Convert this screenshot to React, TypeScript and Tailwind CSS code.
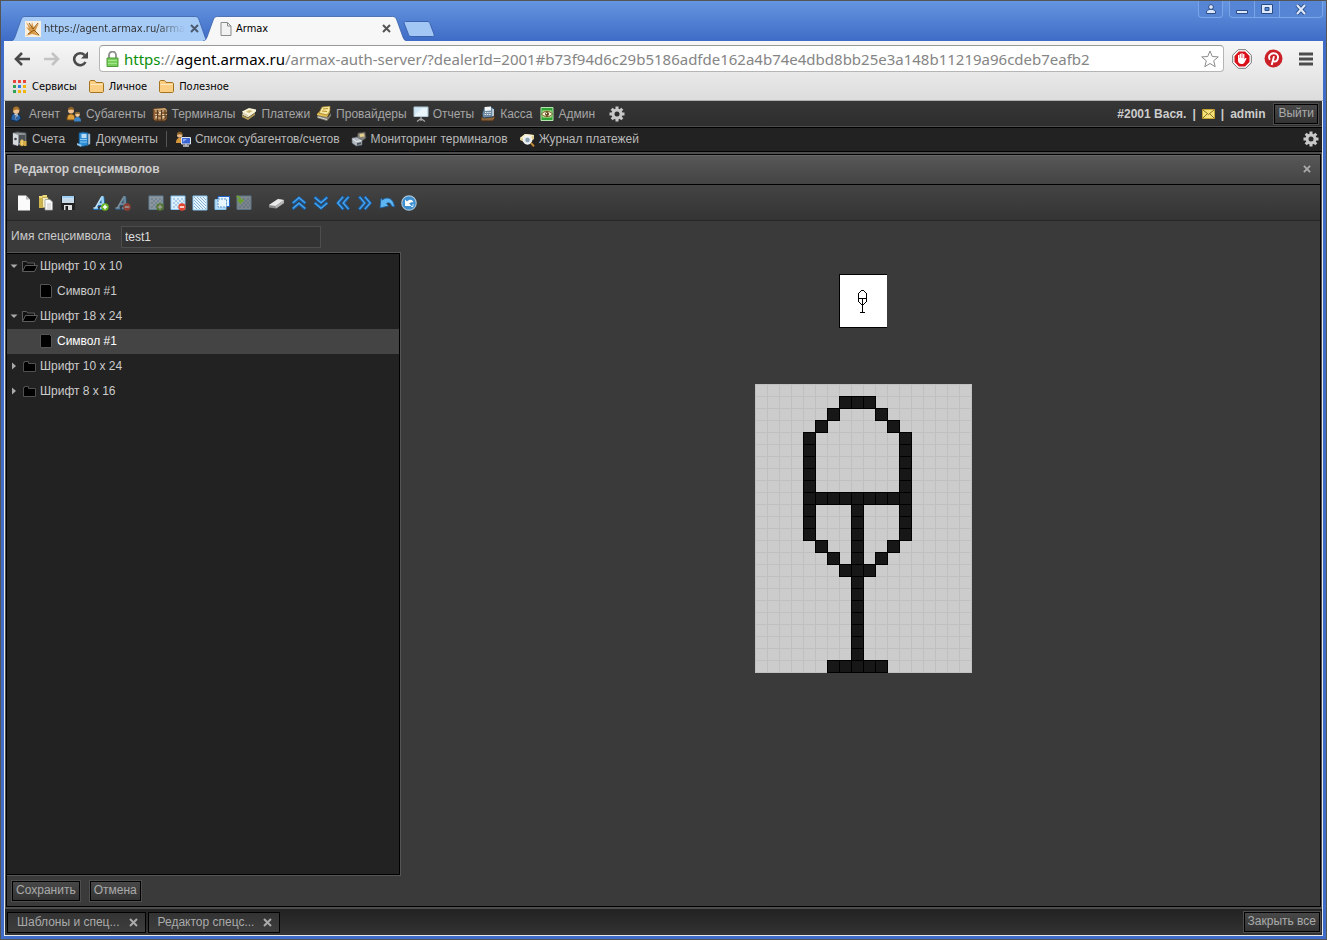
import { useState, type ReactNode } from 'react';

const GLYPH = [
  '..................',
  '.......###........',
  '......#...#.......',
  '.....#.....#......',
  '....#.......#.....',
  '....#.......#.....',
  '....#.......#.....',
  '....#.......#.....',
  '....#.......#.....',
  '....#########.....',
  '....#...#...#.....',
  '....#...#...#.....',
  '....#...#...#.....',
  '.....#..#..#......',
  '......#.#.#.......',
  '.......###........',
  '........#.........',
  '........#.........',
  '........#.........',
  '........#.........',
  '........#.........',
  '........#.........',
  '........#.........',
  '......#####.......',
];

const CELLS = GLYPH.flatMap((row, y) =>
  row.split('').map((c, x) => ({ x, y, on: c === '#' })),
).filter((c) => c.on);

function Icon({ children, className = '' }: { children: ReactNode; className?: string }) {
  return (
    <svg
      width="16"
      height="16"
      viewBox="0 0 16 16"
      fill="none"
      aria-hidden="true"
      className={`shrink-0 ${className}`}
    >
      {children}
    </svg>
  );
}

/* ---------- main menu icons ---------- */

const AgentIcon = () => (
  <Icon>
    <path d="M2 14c0-4 1-6.500 4-6.500 3 0 6 2 6 5.500l-4 2.500z" fill="#2b64a5" stroke="#0f2c52" />
    <path d="M5.500 8l1.500 6L9 8.500z" fill="#e8f0f8" />
    <path d="M6.800 9l.6 4" stroke="#16365f" />
    <circle cx="7.200" cy="4.800" r="3.100" fill="#efc391" />
    <path d="M4 5C3.500 2 5.500.6 7.500.6S11 2.200 10.500 5C9 3 7 3 4 5z" fill="#a8732a" />
  </Icon>
);

const SubagentsIcon = () => (
  <Icon>
    <path d="M1 14c0-4 1-6 4-6s4 2 4 6z" fill="#dda03c" stroke="#6f4812" />
    <circle cx="5" cy="4.500" r="3" fill="#efc391" />
    <path d="M2 4.500C2 2 3.500.8 5 .8S8 2 8 4.500C6 3 4 3 2 4.500z" fill="#8a5f24" />
    <path d="M8 15.500c0-3 1-4.500 3.500-4.500s3.500 1.500 3.500 4.500z" fill="#3b84c8" />
    <circle cx="11.500" cy="8.500" r="2.400" fill="#efc997" />
    <path d="M9 8.500C9 6.500 10 6 11.500 6s2.700.8 2.500 2.500c-1.500-1-3-1-5 0z" fill="#8a6528" />
  </Icon>
);

const TerminalsIcon = () => (
  <Icon>
    <path d="M1 3l12-1 2 2v9l-2 2H3l-2-2z" fill="#94663c" stroke="#4c321a" />
    <path d="M1 3l12-1 2 2H3z" fill="#c9a070" />
    <path d="M3 5h12M3 8.500h12M3 12h10" stroke="#e3c69b" />
    <path d="M5.500 4v11M9.500 4v11M13 4v9" stroke="#5a3c20" strokeWidth="1.200" />
    <path d="M7 6h2v1.500H7zM10.500 10h2v1.500h-2zM3.500 10H5v1.500H3.500z" fill="#f1dfbf" />
  </Icon>
);

const PaymentsIcon = () => (
  <Icon>
    <path d="M1 11l6 3 7-5V7l-7 5-6-3z" fill="#b69c56" />
    <path d="M1 8.500l6 3 7-5-1-1.500-6 4.500L2 7z" fill="#e9e1b6" />
    <path d="M1 5.500L8 2l7 1.500v2L8 10 2 7z" fill="#f8f3d6" />
    <path d="M5 5.800L8.500 4l3 1L8 7z" fill="#c9b471" />
  </Icon>
);

const ProvidersIcon = () => (
  <Icon>
    <path d="M1 10l2-2 9 3 3-4v3l-4 5-10-3z" fill="#817d70" />
    <path d="M1 8l4-4 9 2-3 5-10-2z" fill="#e8c14c" />
    <path d="M6 1l8-1v5l-3 4-8-2z" fill="#f6e6a0" stroke="#8f7423" strokeWidth=".7" />
    <path d="M7 3l5-.5M6 5l5 .5" stroke="#b5912b" />
    <path d="M2 11l9 2.500" stroke="#ddd" />
  </Icon>
);

const ReportsIcon = () => (
  <Icon>
    <path d="M1 1h14v9.500H1z" fill="#d3e8f6" stroke="#b3c7d4" />
    <path d="M2 9l7-7h5v8H2z" fill="#eaf5fc" />
    <path d="M8 11v4M4 15.500l4-3 4 3" stroke="#a5a5a5" strokeWidth="1.300" />
  </Icon>
);

const CashIcon = () => (
  <Icon>
    <path d="M1 12l2-5h11l1 5-2 3H1z" fill="#8d6339" stroke="#3f2b18" />
    <path d="M2 8l2-6 8-1 2 2-1 8-10 1z" fill="#6d8aa2" stroke="#32414e" />
    <path d="M4.500 1L11 .5v4L5 5z" fill="#f3f6f8" />
    <path d="M5 6.500h6M4.700 8.500h6" stroke="#e3ecf1" strokeDasharray="1.400 .8" />
    <path d="M12 3h2v7h-2z" fill="#b3c7d4" />
  </Icon>
);

const AdminIcon = () => (
  <Icon>
    <path d="M2 1.500h12v13H2z" fill="#2fa336" stroke="#b6e3ae" />
    <path d="M3.500 4.500h9v7h-9z" fill="#d7e9a0" />
    <path d="M2.500 8C5 4.500 11 4.500 13.500 8 11 11.500 5 11.500 2.500 8z" fill="#fdf6dc" stroke="#6d521f" />
    <circle cx="8" cy="8" r="2" fill="#5c3b12" />
    <circle cx="7.500" cy="7.500" r=".7" fill="#fff" />
  </Icon>
);

const GearIcon = () => (
  <Icon>
    <g stroke="#c8c8c8" strokeWidth="3">
      <path d="M8 .5v15M.5 8h15M2.700 2.700l10.600 10.600M13.300 2.700L2.700 13.300" />
    </g>
    <circle cx="8" cy="8" r="5.500" fill="#c8c8c8" />
    <circle cx="8" cy="8" r="2.500" fill="#2d2d2d" />
  </Icon>
);

/* ---------- submenu icons ---------- */

const SafeIcon = () => (
  <Icon>
    <path d="M1 2l4-1 9 1v12H1z" fill="#8f9498" stroke="#50555a" />
    <path d="M1 2l5 2v11l-5-2z" fill="#d7dadd" />
    <path d="M7 4h6v8H7z" fill="#4b5156" />
    <circle cx="3.500" cy="8" r="1.300" fill="#43484c" />
    <path d="M8 10l2-2 2 2v4l-2 1.500L8 14zM12 10h2.500v5H12z" fill="#d6aa45" />
    <path d="M10 9v5" stroke="#f9e6a3" />
  </Icon>
);

const DocumentsIcon = () => (
  <Icon>
    <path d="M10 2l4 1v10l-4 2z" fill="#e6eef4" stroke="#5c7990" strokeWidth=".7" />
    <path d="M3 2l4-1 5 1v12l-5 1.500L3 14z" fill="#2e8dd4" stroke="#124b7c" strokeWidth=".8" />
    <path d="M5.500 4h5M5.500 6h5" stroke="#e9f4fb" strokeWidth="1.300" />
    <path d="M4 8.500h7M4 11h7" stroke="#8cc9f2" />
    <path d="M1 12l5 2-1 2-4-2z" fill="#8ec5ec" />
  </Icon>
);

const SubagentListIcon = () => (
  <Icon>
    <path d="M1 12c0-3 1-5 4-5s3 2 3 5z" fill="#d7963a" />
    <circle cx="4.700" cy="4" r="2.700" fill="#e9bd8b" />
    <path d="M2 4c0-2 1-3.300 2.700-3.300S7.500 2 7.500 4c-2-1-3.500-1-5.500 0z" fill="#8a5d22" />
    <path d="M6.500 6.500h9v6.500h-9z" fill="#3a64d2" stroke="#dfe3ee" />
    <path d="M8 8h4l-4 3z" fill="#8fb0ff" />
    <path d="M8 15h6M11 13v2" stroke="#c4c8cf" strokeWidth="1.400" />
  </Icon>
);

const MonitoringIcon = () => (
  <Icon>
    <path d="M7 2l7-1 1 6-4 3-5-2z" fill="#84827c" stroke="#474642" strokeWidth=".7" />
    <path d="M8.500 3l4.500-.5.5 3-4.500.5z" fill="#e6cf8b" />
    <path d="M1 7l5-1 5 3v5l-6 1-4-3z" fill="#b3bac1" stroke="#565d64" strokeWidth=".7" />
    <path d="M1.500 8l4 2.500 5-1" stroke="#eef1f4" />
    <path d="M6 12l4-.7v2L6 14z" fill="#48515a" />
  </Icon>
);

const JournalIcon = () => (
  <Icon>
    <path d="M1 7l5-4 9 1v4l-6 5-8-4z" fill="#dfcf93" />
    <path d="M1 7l5-4 9 1-6 4z" fill="#f6efc9" />
    <circle cx="8.500" cy="9" r="4" fill="#dfe8ee" stroke="#f4f4f4" strokeWidth="1.400" />
    <circle cx="8.500" cy="9" r="2.200" fill="#8ba0ae" />
    <path d="M12 12l3 3.300" stroke="#c58a36" strokeWidth="2" />
  </Icon>
);

/* ---------- editor toolbar icons ---------- */

const Badge = ({ minus = false }: { minus?: boolean }) => (
  <>
    <circle cx="12" cy="12" r="3.700" fill={minus ? '#e2452f' : '#68b41e'} />
    <path d={minus ? 'M9.800 12h4.400' : 'M9.800 12h4.400M12 9.800v4.400'} stroke="#fff" strokeWidth="1.500" />
  </>
);

const NewIcon = () => (
  <Icon>
    <path d="M2 .5h8l4 4v11H2z" fill="#fbfbfb" />
    <path d="M10 .5l4 4h-4z" fill="#b9b9b9" />
  </Icon>
);

const CopyIcon = () => (
  <Icon>
    <path d="M1 1h3l1-1h4v3H5v10H1z" fill="#ecd97c" />
    <path d="M1 3h4v10H1z" fill="#cdb44c" />
    <path d="M4.500 2.500H10v10H4.500z" fill="#f6efc4" stroke="#b8a14a" strokeWidth=".8" />
    <path d="M7 4.500h5l2.500 2.500v8H7z" fill="#fafafa" stroke="#9d9d9d" strokeWidth=".8" />
    <path d="M9 9h4M9 11h4M9 13h4" stroke="#c9c9c9" />
  </Icon>
);

const SaveIcon = () => (
  <Icon>
    <path d="M1 1h14v14H2l-1-1z" fill="#222" />
    <path d="M2 1h12v7H2z" fill="#e9f3fb" />
    <path d="M2 1h12v2.500H2z" fill="#9fd0f4" />
    <path d="M2 5h12M2 7h12" stroke="#a8bfd0" />
    <path d="M4 10h8v5H4z" fill="#dedede" />
    <path d="M5.500 11h2.500v4H5.500z" fill="#1b1b1b" />
  </Icon>
);

const SerifLetter = () => (
  <>
    <path d="M.5 14h5M6.500 14h5M3 13.500L9.500 2.500M10.500 2l.5 12M5 10h6" stroke="#1f74b8" strokeWidth="2" />
    <path d="M.5 13h4.300M7 13h4.500M2.500 13L8.800 2M5 9h4.500" stroke="#bfe4fc" strokeWidth="1.600" />
    <path d="M8.200 1h2.300l1 12.200H8.700z" fill="#9bd3f9" />
  </>
);

const LetterAddIcon = () => (
  <Icon>
    <SerifLetter />
    <Badge />
  </Icon>
);

const LetterRemoveIcon = () => (
  <Icon className="opacity-50">
    <SerifLetter />
    <Badge minus />
  </Icon>
);

const Checks = () => (
  <>
    <path d="M1 1h14v13.500H1z" fill="#ddf0fc" stroke="#86c3ef" />
    <path
      d="M3 4h11M3 8h11M3 12h11"
      stroke="#a9cfec"
      strokeWidth="2"
      strokeDasharray="2 2"
    />
    <path d="M5 6h9M5 10h9" stroke="#a9cfec" strokeWidth="2" strokeDasharray="2 2" />
  </>
);

const SymbolAddIcon = () => (
  <Icon className="opacity-50">
    <Checks />
    <Badge />
  </Icon>
);

const SymbolRemoveIcon = () => (
  <Icon>
    <Checks />
    <Badge minus />
  </Icon>
);

const HatchIcon = () => (
  <Icon>
    <path d="M1 1h14v14H1z" fill="#e4f3fd" stroke="#86c3ef" />
    <path
      d="M2 11l3 3M2 8l6 6M2 5l9 9M2 2l12 12M5 2l9 9M8 2l6 6M11 2l3 3"
      stroke="#7ba9cf"
      strokeWidth=".9"
    />
  </Icon>
);

const CopySymbolIcon = () => (
  <Icon>
    <path d="M4 1.500h11.500v10H4z" fill="#e3f3fe" stroke="#1d62cd" />
    <path d="M1 4.500h11v10H1z" fill="#b7dcf7" stroke="#86c3ef" />
    <path d="M4 4h8.500v8H4z" fill="#eaf6fe" stroke="#5a93c9" strokeDasharray="2 1" />
  </Icon>
);

const ImportIcon = () => (
  <Icon className="opacity-60">
    <g opacity=".7">
      <Checks />
    </g>
    <path d="M.5 1.500c3 0 4 1 4 4.500M1.500 4.500l3 3 3-3" stroke="#8be02a" strokeWidth="2" />
  </Icon>
);

const EraserIcon = () => (
  <Icon>
    <path d="M0 10l9-6 6 1v3l-8 5.500-7-1z" fill="#8c8c8c" />
    <path d="M0 10l9-6 6 1-8.500 6z" fill="#e9e9e9" />
    <path d="M6.500 11L15 5v3l-8 5.500z" fill="#b5b5b5" />
  </Icon>
);

function ChevronsIcon({ turn }: { turn: string }) {
  return (
    <Icon className={turn}>
      <path d="M1.500 8.500L8 3l6.500 5.500M1.500 14L8 8.500l6.500 5.500" stroke="#1660aa" strokeWidth="3.200" />
      <path d="M1.800 8L8 2.700 14.200 8M1.800 13.500L8 8.200l6.200 5.300" stroke="#4aa5ec" strokeWidth="1.300" />
    </Icon>
  );
}

const UndoIcon = () => (
  <Icon>
    <path
      d="M2 3l1.500 2C8 1 14.500 3 15.500 12l-3-1C12 8 9.500 7 7.500 8.500L9.500 11 1 13z"
      fill="#5eb5f3"
      stroke="#1a5f9f"
      strokeWidth=".8"
    />
  </Icon>
);

const ResetIcon = () => (
  <Icon>
    <circle cx="8" cy="8" r="7.200" fill="#3c8fd0" stroke="#a8c3d6" strokeWidth="1.200" />
    <path d="M4 4.500V11h6.500L8.300 8.800C9 7.500 10.500 7 12.500 7.500 12 4.500 8.500 3.500 6 6.500z" fill="#fff" />
    <path d="M10 11.500h2V9" stroke="#d6ebfa" />
  </Icon>
);

/* ---------- tree icons ---------- */

const FolderOpenIcon = () => (
  <Icon>
    <path d="M.5 13.500v-10h4l1 1.500h7v2.500" fill="#111" stroke="#5c5c5c" />
    <path d="M.5 13.500l3-6h12l-3 6z" fill="#000" stroke="#5c5c5c" />
  </Icon>
);

const FolderIcon = () => (
  <Icon>
    <path d="M1.500 13.500V4.500h1v-1h4v2h7v8z" fill="#000" stroke="#505050" />
  </Icon>
);

const FileIcon = () => (
  <Icon>
    <path d="M1.500 1.500h9l2 2v11h-11z" fill="#000" stroke="#555" />
  </Icon>
);

/* ---------- browser window ---------- */

function TabShape({ fill }: { fill: string }) {
  return (
    <svg
      className="absolute inset-0 h-full w-full"
      viewBox="0 0 200 25"
      preserveAspectRatio="none"
      aria-hidden="true"
    >
      <path
        d="M0 25c2 0 3-1.500 4-4L10 4c1-2.500 2-3.500 4-3.500h172c2 0 3 1 4 3.500l6 17c1 2.500 2 4 4 4"
        fill={fill}
        stroke="#3a62a8"
        strokeWidth=".8"
      />
    </svg>
  );
}

const CloseX = () => (
  <svg width="9" height="9" viewBox="0 0 9 9" aria-hidden="true">
    <path d="M1 1l7 7M8 1L1 8" stroke="currentColor" strokeWidth="2" />
  </svg>
);

function TitleBar() {
  return (
    <header className="flex h-10 items-start justify-between bg-linear-to-b from-[#6595e0] to-[#3f6cc6]">
      <div className="flex items-end pt-[15px] pl-[10px]">
        <div className="relative flex h-[25px] w-[198px] items-center pr-[10px] pl-[14px]">
          <TabShape fill="#a6cbf7" />
          <svg width="16" height="16" viewBox="0 0 16 16" className="relative shrink-0" aria-hidden="true">
            <path d="M0 0h16v16H0z" fill="#f9efdf" />
            <path d="M1 1l3 6-3-1 4 5-4 4 6-2 8 2-5-4 4-9-5 5-2-6-1 5z" fill="#d79a48" />
            <path d="M4 2l4 6 5-6M3 13l6-4 5 5" stroke="#8c5716" fill="none" />
          </svg>
          <a
            href="#agent"
            className="relative ml-[3px] mask-r-from-80% pt-0.5 text-[11px] whitespace-nowrap text-[#333]"
          >
            https://agent.armax.ru/arma
          </a>
          <button type="button" aria-label="Закрыть вкладку" className="relative ml-auto text-[#4c5a70]">
            <CloseX />
          </button>
        </div>
        <div className="relative -ml-[6px] flex h-[25px] w-[204px] items-center pr-4 pl-[17px]">
          <TabShape fill="#f7f7f7" />
          <svg width="12" height="14" viewBox="0 0 12 14" className="relative" aria-hidden="true">
            <path d="M1 .5h6.500L11 4v9.500H1zM7.500.5V4H11" fill="#f2f2f2" stroke="#8b8b8b" />
          </svg>
          <a href="#armax" className="relative ml-1 pt-0.5 text-[11px] text-black">
            Armax
          </a>
          <button type="button" aria-label="Закрыть вкладку" className="relative ml-auto text-[#555]">
            <CloseX />
          </button>
        </div>
        <button type="button" aria-label="Новая вкладка" className="mb-1 -ml-1">
          <svg width="32" height="16" viewBox="0 0 32 16" aria-hidden="true">
            <path
              d="M1 2c0-1 .5-1.500 1.500-1.500H24c1.500 0 2.500.5 3 2L31 13c.5 1.500 0 2.500-1.500 2.500H9c-2 0-3-.5-3.500-2z"
              fill="#a3c7f4"
              stroke="#3b62ae"
            />
          </svg>
        </button>
      </div>
      <div className="flex text-[#dce8fb]">
        <button
          type="button"
          aria-label="Профиль"
          className="mr-1.5 flex h-[17px] w-[25px] items-center justify-center rounded-b border border-t-0 border-[#7ba5e6] bg-[#5585d4]"
        >
          <svg width="10" height="10" viewBox="0 0 10 10" aria-hidden="true">
            <path d="M.5 9.500V8C.5 6.500 2 6 3.500 5.500h3C8 6 9.500 6.500 9.500 8v1.500z" fill="#dce8fb" stroke="#2c4c86" />
            <circle cx="5" cy="3" r="2.400" fill="#dce8fb" stroke="#2c4c86" />
          </svg>
        </button>
        <div className="mr-[3px] flex h-[17px] divide-x divide-[#7ba5e6] rounded-b border border-t-0 border-[#7ba5e6] bg-[#5585d4]">
          <button type="button" aria-label="Свернуть" className="flex w-[25px] items-center justify-center">
            <svg width="12" height="12" viewBox="0 0 12 12" aria-hidden="true">
              <path d="M.5 7.500h11v3H.5z" fill="#dce8fb" stroke="#2c4c86" />
            </svg>
          </button>
          <button type="button" aria-label="Развернуть" className="flex w-[25px] items-center justify-center">
            <svg width="12" height="10" viewBox="0 0 12 10" aria-hidden="true">
              <path d="M.5.500h11v9H.5z" fill="#dce8fb" stroke="#2c4c86" />
              <path d="M4 3.500h4v3H4z" fill="#5585d4" stroke="#2c4c86" />
            </svg>
          </button>
          <button type="button" aria-label="Закрыть" className="flex w-[42px] items-center justify-center">
            <svg width="12" height="11" viewBox="0 0 12 11" aria-hidden="true">
              <path d="M2 1l8 9M10 1L2 10" stroke="#2c4c86" strokeWidth="4" />
              <path d="M2 1l8 9M10 1L2 10" stroke="#dce8fb" strokeWidth="2.200" />
            </svg>
          </button>
        </div>
      </div>
    </header>
  );
}

function AddressBar() {
  return (
    <div className="flex h-[34px] items-center pt-px pr-[10px] pl-[10px]">
      <button type="button" aria-label="Назад">
        <svg width="18" height="16" viewBox="0 0 18 16" fill="none" aria-hidden="true">
          <path d="M2 8h14M8 2L2 8l6 6" stroke="#4a4a4a" strokeWidth="2.600" />
        </svg>
      </button>
      <button type="button" aria-label="Вперёд" disabled className="ml-[11px]">
        <svg width="18" height="16" viewBox="0 0 18 16" fill="none" aria-hidden="true">
          <path d="M1 8h14M9 2l6 6-6 6" stroke="#c3c3c3" strokeWidth="2.600" />
        </svg>
      </button>
      <button type="button" aria-label="Обновить" className="ml-[11px]">
        <svg width="18" height="16" viewBox="0 0 18 16" fill="none" aria-hidden="true">
          <path d="M13.500 11A6 6 0 1 1 12.500 4" stroke="#4a4a4a" strokeWidth="2.600" />
          <path d="M16 .5v7H9z" fill="#4a4a4a" />
        </svg>
      </button>
      <div className="ml-[9px] flex h-[27px] min-w-0 flex-1 items-center rounded-sm border border-[#b5b5b5] border-t-[#999] bg-white pr-1 pl-[6px]">
        <svg width="13" height="16" viewBox="0 0 13 16" className="shrink-0" fill="none" aria-hidden="true">
          <path d="M3 7V4a3.500 3.500 0 0 1 7 0v3" stroke="#8d8d8d" strokeWidth="1.800" />
          <path d="M1 7h11v8.500H1z" fill="#79cf5c" stroke="#4f9a38" />
          <path d="M2 9.500h9M2 12.500h9" stroke="#a3e68b" />
        </svg>
        <p className="ml-[5px] min-w-0 flex-1 overflow-hidden font-['Noto_Sans','Open_Sans',sans-serif] text-[15px] leading-6 whitespace-nowrap text-[#858585]">
          <span className="text-[#0a8f0a]">https</span>://
          <span className="text-black">agent.armax.ru</span>
          /armax-auth-server/?dealerId=2001#b73f94d6c29b5186adfde162a4b74e4dbd8bb25e3a148b11219a96cdeb7eafb2
        </p>
        <button type="button" aria-label="Добавить в закладки">
          <svg width="18" height="18" viewBox="0 0 18 18" fill="none" aria-hidden="true">
            <path
              d="M9 1l2.300 5.500 6 .4-4.600 3.900 1.500 5.900L9 13.500l-5.200 3.200 1.500-5.900L.7 6.900l6-.4z"
              stroke="#8b8b8b"
            />
          </svg>
        </button>
      </div>
      <div className="ml-2 flex items-center gap-3">
        <button type="button" aria-label="Блокировщик">
          <svg width="20" height="20" viewBox="0 0 20 20" aria-hidden="true">
            <path d="M6.200.7h7.600l5.500 5.500v7.600l-5.500 5.500H6.200L.7 13.800V6.200z" fill="#fff" stroke="#777" />
            <path d="M6.900 2.500h6.200l4.400 4.400v6.200l-4.400 4.400H6.900l-4.400-4.400V6.900z" fill="#d9101a" />
            <path
              d="M6 9.500V6h1.300v3h.4V4.700H9V9h.4V4.200h1.300V9h.4V5h1.300v5.200l1.200-1.500 1 .8-2 3.700c-.5 1-1.500 1.800-3 1.800-2.200 0-3.600-1.500-3.600-3.500z"
              fill="#fff"
            />
          </svg>
        </button>
        <button type="button" aria-label="Pinterest">
          <svg width="19" height="19" viewBox="0 0 19 19" fill="none" aria-hidden="true">
            <circle cx="9.500" cy="9.500" r="9" fill="#cb2027" />
            <path
              d="M6 10.800C4 8 5.500 4.300 9.700 4.300c3 0 4.600 2 4.300 4.400-.3 2.800-2 4-3.500 3.800-.9 0-1.500-.6-1.700-1.200M10 7.200L7.700 16"
              stroke="#fff"
              strokeWidth="1.900"
            />
          </svg>
        </button>
        <button type="button" aria-label="Меню" className="ml-1">
          <svg width="14" height="14" viewBox="0 0 14 14" aria-hidden="true">
            <path d="M0 2h14M0 7h14M0 12h14" stroke="#4c4c4c" strokeWidth="3" />
          </svg>
        </button>
      </div>
    </div>
  );
}

const APP_COLORS = [
  'bg-[#e8453c]', 'bg-[#e8453c]', 'bg-[#e8453c]',
  'bg-[#31a354]', 'bg-[#2f7de0]', 'bg-[#f2b50c]',
  'bg-[#31a354]', 'bg-[#f2b50c]', 'bg-[#f2b50c]',
];

const BookmarkFolder = () => (
  <svg width="15" height="13" viewBox="0 0 15 13" aria-hidden="true">
    <path
      d="M.5 11V2c0-1 .5-1.500 1.500-1.500h3.500L7 2.500h6c1 0 1.500.5 1.500 1.500v7c0 1-.5 1.500-1.500 1.500H2C1 12.500.5 12 .5 11z"
      fill="#fbcf83"
      stroke="#a5741f"
    />
    <path d="M1.500 4.500h12" stroke="#fde7bd" />
  </svg>
);

function Bookmarks() {
  return (
    <nav className="flex h-[26px] items-center gap-3 border-b border-[#b0b0b0] pb-0.5 pl-[9px] text-[11px] text-black">
      <a href="#services" className="flex items-center gap-[6px]">
        <span className="grid grid-cols-3 gap-0.5">
          {APP_COLORS.map((color, i) => (
            <span key={i} className={`size-[3px] ${color}`} />
          ))}
        </span>
        <span className="pt-px">Сервисы</span>
      </a>
      <a href="#private" className="flex items-center gap-[5px]">
        <BookmarkFolder />
        <span className="pt-px">Личное</span>
      </a>
      <a href="#useful" className="flex items-center gap-[5px]">
        <BookmarkFolder />
        <span className="pt-px">Полезное</span>
      </a>
    </nav>
  );
}

/* ---------- application ---------- */

const MENU = [
  { label: 'Агент', icon: <AgentIcon /> },
  { label: 'Субагенты', icon: <SubagentsIcon /> },
  { label: 'Терминалы', icon: <TerminalsIcon /> },
  { label: 'Платежи', icon: <PaymentsIcon /> },
  { label: 'Провайдеры', icon: <ProvidersIcon /> },
  { label: 'Отчеты', icon: <ReportsIcon /> },
  { label: 'Касса', icon: <CashIcon /> },
  { label: 'Админ', icon: <AdminIcon /> },
];

function AppButton({ children }: { children: ReactNode }) {
  return (
    <button
      type="button"
      className="h-5 border border-black bg-linear-to-b from-[#484848] to-[#333] px-[3px] pb-0.5 leading-4 text-[#aaa] outline outline-[#4d4d4d]"
    >
      {children}
    </button>
  );
}

function MainMenu() {
  return (
    <nav className="flex h-[26px] items-center justify-between border-b border-[#4d4d4d] bg-linear-to-b from-[#363636] to-[#2e2e2e] pr-1 pl-1 text-[#a5a5a5]">
      <div className="flex items-center gap-[6px]">
        {MENU.map((item) => (
          <a key={item.label} href="#menu" className="flex items-center gap-1">
            {item.icon}
            {item.label}
          </a>
        ))}
        <button type="button" aria-label="Настройки" className="ml-2">
          <GearIcon />
        </button>
      </div>
      <div className="flex items-center gap-[6px] font-bold text-[#ccc]">
        <span>#2001 Вася.</span>
        <span>|</span>
        <svg width="13" height="10" viewBox="0 0 13 10" aria-label="Сообщения">
          <path d="M.5.500h12v9H.5z" fill="#f6e27c" stroke="#c4a637" />
          <path d="M.5.500l6 5 6-5M.5 9.500L5 5M12.500 9.500L8 5" fill="none" stroke="#8a6f1d" />
        </svg>
        <span>|</span>
        <a href="#admin">admin</a>
        <span className="ml-[3px] flex font-normal">
          <AppButton>Выйти</AppButton>
        </span>
      </div>
    </nav>
  );
}

function SubMenu() {
  return (
    <nav className="flex h-[25px] items-center border-y border-black bg-[#222] pr-[3px] pb-0.5 pl-[7px] text-[#b8b8b8]">
      <div className="flex items-center gap-[11px]">
        <a href="#accounts" className="flex items-center gap-1">
          <SafeIcon />
          Счета
        </a>
        <a href="#documents" className="flex items-center gap-1">
          <DocumentsIcon />
          Документы
        </a>
        <span className="-mx-[3px] h-4 w-px bg-[#555]" />
        <a href="#subagents" className="flex items-center gap-1">
          <SubagentListIcon />
          Список субагентов/счетов
        </a>
        <a href="#monitoring" className="flex items-center gap-1">
          <MonitoringIcon />
          Мониторинг терминалов
        </a>
        <a href="#journal" className="flex items-center gap-1">
          <JournalIcon />
          Журнал платежей
        </a>
      </div>
      <button type="button" aria-label="Настройки меню" className="ml-auto">
        <GearIcon />
      </button>
    </nav>
  );
}

const TOOLS = [
  [
    { label: 'Создать', icon: <NewIcon /> },
    { label: 'Копировать', icon: <CopyIcon /> },
    { label: 'Сохранить', icon: <SaveIcon /> },
  ],
  [
    { label: 'Добавить шрифт', icon: <LetterAddIcon /> },
    { label: 'Удалить шрифт', icon: <LetterRemoveIcon /> },
  ],
  [
    { label: 'Добавить символ', icon: <SymbolAddIcon /> },
    { label: 'Удалить символ', icon: <SymbolRemoveIcon /> },
    { label: 'Залить', icon: <HatchIcon /> },
    { label: 'Дублировать символ', icon: <CopySymbolIcon /> },
    { label: 'Вставить символ', icon: <ImportIcon /> },
  ],
  [
    { label: 'Очистить', icon: <EraserIcon /> },
    { label: 'Вверх', icon: <ChevronsIcon turn="" /> },
    { label: 'Вниз', icon: <ChevronsIcon turn="rotate-180" /> },
    { label: 'Влево', icon: <ChevronsIcon turn="-rotate-90" /> },
    { label: 'Вправо', icon: <ChevronsIcon turn="rotate-90" /> },
    { label: 'Отменить', icon: <UndoIcon /> },
    { label: 'Сбросить', icon: <ResetIcon /> },
  ],
];

function Toolbar() {
  return (
    <div className="flex h-9 items-center gap-[17px] border-b border-[#262626] bg-linear-to-b from-[#444] to-[#343434] px-[9px]">
      {TOOLS.map((group, i) => (
        <div key={i} className="flex gap-[6px]">
          {group.map((tool) => (
            <button key={tool.label} type="button" aria-label={tool.label}>
              {tool.icon}
            </button>
          ))}
        </div>
      ))}
    </div>
  );
}

const FONTS = [
  { label: 'Шрифт 10 x 10', open: true },
  { label: 'Шрифт 18 x 24', open: true },
  { label: 'Шрифт 10 x 24', open: false },
  { label: 'Шрифт 8 x 16', open: false },
];

function FontTree() {
  const [selected, setSelected] = useState(1);

  return (
    <div className="flex-1 border-t border-r border-b border-[#555]">
      <ul className="h-full border-t border-r border-b border-black bg-[#222] text-[#ccc]">
        {FONTS.map((font, i) => (
          <li key={font.label}>
            <button type="button" className="flex h-[25px] w-full items-center pb-px pl-[3px]">
              <svg width="8" height="8" viewBox="0 0 8 8" className="mr-1" aria-hidden="true">
                <path d={font.open ? 'M.5 2.500h7L4 6z' : 'M2 .5v7l4-3.500z'} fill="#aaa" />
              </svg>
              {font.open ? <FolderOpenIcon /> : <FolderIcon />}
              <span className="ml-0.5">{font.label}</span>
            </button>
            {font.open && (
              <button
                type="button"
                onClick={() => setSelected(i)}
                className={`flex h-[25px] w-full items-center pb-px pl-8 ${
                  selected === i ? 'bg-[#444] text-white' : ''
                }`}
              >
                <FileIcon />
                <span className="ml-0.5">Символ #1</span>
              </button>
            )}
          </li>
        ))}
      </ul>
    </div>
  );
}

function Canvas() {
  return (
    <section className="flex flex-1 flex-col items-center gap-14 pt-[53px] pl-[6px]">
      <div className="mr-px border-y border-l border-black bg-white p-[14px]">
        <svg width="19" height="24" viewBox="0 0 19 24" shapeRendering="crispEdges" aria-hidden="true">
          {CELLS.map((c) => (
            <rect key={`${c.x}-${c.y}`} x={c.x} y={c.y} width="1" height="1" fill="#000" />
          ))}
        </svg>
      </div>
      <svg width="217" height="289" viewBox="0 0 217 289" shapeRendering="crispEdges" role="img" aria-label="Символ #1">
        <rect width="217" height="289" fill="#ccc" />
        {Array.from({ length: 19 }, (_, i) => (
          <rect key={`v${i}`} x={i * 12} y="0" width="1" height="289" fill="#c0c0c0" />
        ))}
        {Array.from({ length: 25 }, (_, i) => (
          <rect key={`h${i}`} x="0" y={i * 12} width="217" height="1" fill="#c0c0c0" />
        ))}
        {CELLS.map((c) => (
          <rect
            key={`${c.x}-${c.y}`}
            x={c.x * 12 + 0.5}
            y={c.y * 12 + 0.5}
            width="12"
            height="12"
            fill="#171717"
            stroke="#000"
          />
        ))}
      </svg>
    </section>
  );
}

function Editor() {
  const [name, setName] = useState('test1');

  return (
    <main className="mx-px flex flex-1 flex-col border border-black bg-[#3a3a3a]">
      <div className="flex h-[30px] items-center justify-between border-b border-t border-b-black border-t-[#666] bg-linear-to-b from-[#575757] to-[#444] px-[7px] pb-0.5">
        <h1 className="font-bold text-[#ccc]">Редактор спецсимволов</h1>
        <button type="button" aria-label="Закрыть редактор" className="mr-0.5 text-[#aaa]">
          <svg width="8" height="8" viewBox="0 0 9 9" aria-hidden="true">
            <path d="M1 1l7 7M8 1L1 8" stroke="currentColor" strokeWidth="2" />
          </svg>
        </button>
      </div>
      <Toolbar />
      <div className="flex flex-1">
        <div className="flex w-[394px] flex-col">
          <div className="flex h-[31px] items-center gap-[10px] pl-1">
            <label htmlFor="symbol-name" className="pb-px text-[#ccc]">
              Имя спецсимвола
            </label>
            <input
              id="symbol-name"
              value={name}
              onChange={(e) => setName(e.target.value)}
              className="h-[22px] w-[200px] border border-[#4d4d4d] bg-[#333] px-[3px] text-[#ddd] outline-none"
            />
          </div>
          <FontTree />
          <div className="flex h-[30px] items-center gap-[10px] pl-[5px]">
            <AppButton>Сохранить</AppButton>
            <AppButton>Отмена</AppButton>
          </div>
        </div>
        <Canvas />
      </div>
    </main>
  );
}

function TaskBar() {
  return (
    <footer className="flex h-7 items-center justify-between border-t-2 border-[#4d4d4d] bg-linear-to-b from-[#222] to-[#333] px-0.5 text-[#aaa]">
      <div className="flex gap-0.5">
        {['Шаблоны и спец...', 'Редактор спецс...'].map((label) => (
          <div
            key={label}
            className="flex h-[21px] items-center gap-[9px] border border-black bg-linear-to-b from-[#333] to-[#3e3e3e] pr-[7px] pl-[9px]"
          >
            <button type="button">{label}</button>
            <button type="button" aria-label="Закрыть окно">
              <CloseX />
            </button>
          </div>
        ))}
      </div>
      <AppButton>Закрыть все</AppButton>
    </footer>
  );
}

export default function App() {
  return (
    <div className="flex min-h-screen flex-col border border-[#555] bg-[#3f6cc6] pb-[3px] font-['DejaVu_Sans_Condensed','DejaVu_Sans',sans-serif]">
      <TitleBar />
      <div className="mx-[3px] flex flex-1 flex-col bg-[#e8e8e8]">
        <div className="bg-linear-to-b from-[#f7f7f7] to-[#dcdcdc]">
          <AddressBar />
          <Bookmarks />
        </div>
        <div className="mx-px mb-px flex flex-1 flex-col bg-[#4d4d4d] font-['Liberation_Sans',sans-serif] text-xs">
          <MainMenu />
          <SubMenu />
          <div className="h-0.5" />
          <Editor />
          <TaskBar />
        </div>
      </div>
    </div>
  );
}
